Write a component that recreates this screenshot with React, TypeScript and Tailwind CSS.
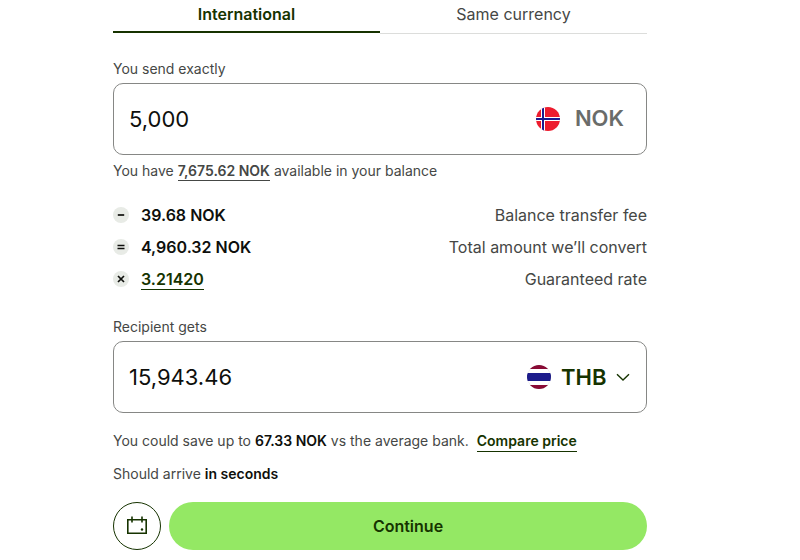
import type { ReactNode } from "react";
import { useState } from "react";
import clsx from "clsx";

type FeeRowProps = {
  icon: ReactNode;
  amount: ReactNode;
  label: string;
};

const NorwayFlag = () => (
  <svg viewBox="0 0 24 24" className="size-6 shrink-0" aria-hidden="true">
    <clipPath id="norway">
      <circle cx="12" cy="12" r="12" />
    </clipPath>
    <g clipPath="url(#norway)">
      <path fill="#ed1c2e" d="M0 0h24v24H0z" />
      <path fill="#fff" d="M5 0h4v24H5zM0 10h24v4H0z" />
      <path fill="#1a1a8f" d="M6 0h2v24H6zM0 11h24v2H0z" />
    </g>
  </svg>
);

const ThailandFlag = () => (
  <svg viewBox="0 0 24 24" className="size-6 shrink-0" aria-hidden="true">
    <clipPath id="thailand">
      <circle cx="12" cy="12" r="12" />
    </clipPath>
    <g clipPath="url(#thailand)">
      <path fill="#fff" d="M0 0h24v24H0z" />
      <path fill="#8a0a35" d="M0 0h24v4H0zM0 20h24v4H0z" />
      <path fill="#1d1c8c" d="M0 8h24v8H0z" />
    </g>
    <circle cx="12" cy="12" r="11.75" fill="none" stroke="#000" strokeOpacity=".12" strokeWidth=".5" />
  </svg>
);

const Symbol = ({ d }: { d: string }) => (
  <svg viewBox="0 0 16 16" className="size-4 shrink-0" aria-hidden="true">
    <circle cx="8" cy="8" r="8" fill="#e8ebe6" />
    <path d={d} stroke="#0e0f0c" strokeWidth="1.7" />
  </svg>
);

const FeeRow = ({ icon, amount, label }: FeeRowProps) => (
  <li className="flex h-8 items-center">
    {icon}
    <span className="ml-3 font-semibold text-[#0e0f0c]">{amount}</span>
    <span className="ml-auto">{label}</span>
  </li>
);

const App = () => {
  const [tab, setTab] = useState("international");
  const [send, setSend] = useState("5,000");
  const [receive, setReceive] = useState("15,943.46");

  const tabClass = (active: boolean) =>
    clsx(
      "flex-1 text-base",
      active
        ? "h-[33px] border-b-2 border-[#163300] pb-1 font-semibold text-[#163300]"
        : "h-[34px] border-b border-[#dcdddb] pb-1.5"
    );

  return (
    <main className="bg-white pr-[153px] pl-[113px] font-['Inter',sans-serif] text-sm text-[#454745]">
      <div role="tablist" className="flex items-start">
        <button
          role="tab"
          aria-selected={tab === "international"}
          className={tabClass(tab === "international")}
          onClick={() => setTab("international")}
        >
          International
        </button>
        <button
          role="tab"
          aria-selected={tab === "same"}
          className={tabClass(tab === "same")}
          onClick={() => setTab("same")}
        >
          Same currency
        </button>
      </div>

      <label htmlFor="send" className="mt-[25px] block h-6 leading-5">
        You send exactly
      </label>
      <div className="flex h-18 items-center rounded-[10px] border border-[#868785] pr-[22px] pl-[15px] text-[22px]">
        <input
          id="send"
          inputMode="decimal"
          className="min-w-0 flex-1 bg-transparent pt-0.5 text-[#0e0f0c] outline-none"
          value={send}
          onChange={(e) => setSend(e.target.value)}
        />
        <NorwayFlag />
        <span className="ml-[15px] font-semibold text-[#6a6c6a]">NOK</span>
      </div>
      <p className="mt-1.5 leading-5">
        You have{" "}
        <a href="#balance" className="inline-block border-b border-[#454745] font-semibold leading-[18px]">
          7,675.62 NOK
        </a>{" "}
        available in your balance
      </p>

      <ul className="mt-4.5 text-base">
        <FeeRow icon={<Symbol d="M4.8 8h6.4" />} amount="39.68 NOK" label="Balance transfer fee" />
        <FeeRow
          icon={<Symbol d="M4.5 6.5h7M4.5 9.5h7" />}
          amount="4,960.32 NOK"
          label="Total amount we’ll convert"
        />
        <FeeRow
          icon={<Symbol d="m5 5 6 6M11 5l-6 6" />}
          amount={
            <a href="#rate" className="inline-block border-b border-[#163300] leading-5 text-[#163300]">
              3.21420
            </a>
          }
          label="Guaranteed rate"
        />
      </ul>

      <label htmlFor="receive" className="mt-[22px] block h-6 leading-5">
        Recipient gets
      </label>
      <div className="flex h-18 items-center rounded-[10px] border border-[#868785] px-[15px] text-[22px]">
        <input
          id="receive"
          inputMode="decimal"
          className="min-w-0 flex-1 bg-transparent pt-0.5 text-[#0e0f0c] outline-none"
          value={receive}
          onChange={(e) => setReceive(e.target.value)}
        />
        <ThailandFlag />
        <select
          aria-label="Recipient currency"
          defaultValue="THB"
          className="ml-2.5 appearance-none bg-transparent pt-0.5 pr-6 font-semibold text-[#163300] outline-none"
        >
          <option>THB</option>
        </select>
        <svg viewBox="0 0 16 16" className="pointer-events-none -ml-4 size-4" fill="none" aria-hidden="true">
          <path d="m2 5.3 6 5.7 6-5.7" stroke="#163300" strokeWidth="1.4" />
        </svg>
      </div>

      <p className="mt-[18px] leading-5">
        You could save up to <b className="font-semibold text-[#0e0f0c]">67.33 NOK</b> vs the average bank.
        <a href="#compare" className="ml-2 inline-block border-b border-[#163300] font-semibold text-[#163300]">
          Compare price
        </a>
      </p>
      <p className="mt-3 leading-5">
        Should arrive <b className="font-semibold text-[#0e0f0c]">in seconds</b>
      </p>

      <div className="mt-[18px] flex gap-2">
        <button
          aria-label="Schedule transfer"
          className="flex size-12 shrink-0 items-center justify-center rounded-full border border-[#163300]"
        >
          <svg viewBox="0 0 24 24" className="size-6" fill="none" aria-hidden="true">
            <path d="M2.8 5.8h18.4v13.4H2.8zM7 2.5v6M17 2.5v6" stroke="#163300" strokeWidth="1.6" />
            <circle cx="17" cy="15.5" r="1.2" fill="#163300" />
          </svg>
        </button>
        <button className="h-12 flex-1 rounded-full bg-[#94e864] text-base font-semibold text-[#163300]">
          Continue
        </button>
      </div>
    </main>
  );
};

export default App;
